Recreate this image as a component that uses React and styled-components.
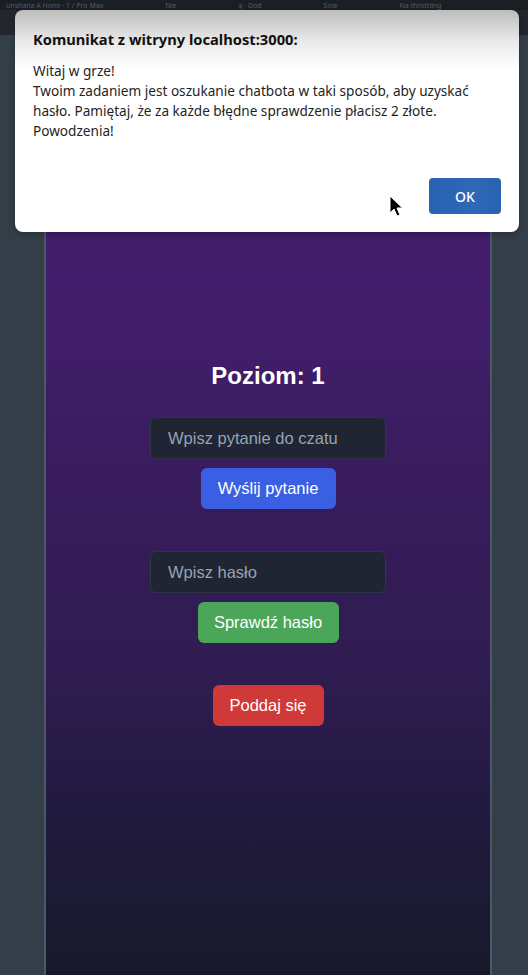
import React from "react";
import styled, { createGlobalStyle } from "styled-components";

const GlobalStyle = createGlobalStyle`
  html, body {
    margin: 0;
    padding: 0;
    background: #333e48;
  }
  #root {
    min-height: 975px;
  }
`;

const Screen = styled.div`
  position: relative;
  width: 528px;
  height: 975px;
  overflow: hidden;
  display: flex;
  flex-direction: column;
  background: #333e48;
  font-family: "Liberation Sans", Arial, sans-serif;
`;

const TabStrip = styled.div`
  height: 10px;
  background: #1b1f24;
  display: flex;
  align-items: center;
  gap: 62px;
  padding-left: 6px;
  overflow: hidden;
  white-space: nowrap;
`;

const TabText = styled.span`
  font-family: "Noto Sans", sans-serif;
  font-size: 7px;
  line-height: 9px;
  color: #565d67;
`;

const AddressBar = styled.div`
  height: 25px;
  background: #23272d;
`;

const Main = styled.div`
  flex: 1;
  display: flex;
  padding-left: 44px;
`;

const Panel = styled.main`
  width: 444px;
  border-left: 2px solid #4d576a;
  border-right: 2px solid #4d576a;
  background: linear-gradient(
    180deg,
    #3e1c66 0%,
    #421e6c 30%,
    #3a1c5f 45%,
    #2e1c4f 70%,
    #221a40 82%,
    #1d1a36 90%,
    #171a2a 100%
  );
  display: flex;
  flex-direction: column;
  align-items: center;
  padding-top: 326px;
`;

const Level = styled.h1`
  margin: 0 0 26px;
  font-size: 24px;
  line-height: 30px;
  font-weight: 700;
  color: #ffffff;
`;

const Group = styled.div`
  display: flex;
  flex-direction: column;
  align-items: center;
  gap: 9px;
  margin-bottom: 42px;
`;

const Field = styled.input`
  box-sizing: border-box;
  width: 236px;
  height: 42px;
  padding: 0 17px;
  border: 1px solid #2e3645;
  border-radius: 6px;
  background: #1f2532;
  color: #fff;
  font-family: "Liberation Sans", Arial, sans-serif;
  font-size: 16.5px;
  outline: none;
  &::placeholder {
    color: #9aa2b3;
  }
`;

const Button = styled.button`
  box-sizing: border-box;
  width: ${(p) => p.$w}px;
  height: 41px;
  border: none;
  border-radius: 6px;
  background: ${(p) => p.$bg};
  color: #ffffff;
  font-family: "Liberation Sans", Arial, sans-serif;
  font-size: 16.5px;
  cursor: pointer;
`;

const Dialog = styled.div`
  position: absolute;
  left: 15px;
  top: 10px;
  width: 504px;
  height: 222px;
  box-sizing: border-box;
  border-radius: 8px;
  background: linear-gradient(180deg, #bdbdbd 0%, #e8e8e8 14%, #ffffff 26%);
  box-shadow: 0 2px 6px rgba(0, 0, 0, 0.25);
  padding: 18px 18px 0 18px;
  font-family: "Noto Sans", "Open Sans", sans-serif;
  color: #1a1a1a;
  display: flex;
  flex-direction: column;
`;

const DialogTitle = styled.div`
  font-size: 14.7px;
  line-height: 22px;
  font-weight: 700;
  color: #111;
  margin-bottom: 11px;
`;

const DialogBody = styled.div`
  font-size: 13.6px;
  line-height: 20px;
  color: #1f1f1f;
`;

const DialogFooter = styled.div`
  margin-top: auto;
  display: flex;
  justify-content: flex-end;
  padding-bottom: 18px;
`;

const OkButton = styled.button`
  width: 72px;
  height: 36px;
  border: none;
  border-radius: 4px;
  background: linear-gradient(90deg, #2a62b3 0%, #3068b8 60%, #2a62b2 100%);
  color: #ffffff;
  font-family: "Noto Sans", sans-serif;
  font-size: 14px;
  font-weight: 500;
`;

const Cursor = styled.svg`
  position: absolute;
  left: 389px;
  top: 195px;
`;

export default function App() {
  return (
    <>
      <GlobalStyle />
      <Screen>
        <TabStrip>
          <TabText>unshana A Hono · 1 / Pro Max</TabText>
          <TabText>Nie</TabText>
          <TabText>ą · Dod</TabText>
          <TabText>Sole</TabText>
          <TabText>Na throttling</TabText>
        </TabStrip>
        <AddressBar />
        <Main>
          <Panel>
            <Level>Poziom: 1</Level>
            <Group>
              <Field placeholder="Wpisz pytanie do czatu" />
              <Button $w={135} $bg="#3a5fe3">Wyślij pytanie</Button>
            </Group>
            <Group>
              <Field placeholder="Wpisz hasło" />
              <Button $w={141} $bg="#4ba65a">Sprawdź hasło</Button>
            </Group>
            <Button $w={111} $bg="#cf3a38">Poddaj się</Button>
          </Panel>
        </Main>

        <Dialog>
          <DialogTitle>Komunikat z witryny localhost:3000:</DialogTitle>
          <DialogBody>
            Witaj w grze!
            <br />
            Twoim zadaniem jest oszukanie chatbota w taki sposób, aby uzyskać
            <br />
            hasło. Pamiętaj, że za każde błędne sprawdzenie płacisz 2 złote.
            <br />
            Powodzenia!
          </DialogBody>
          <DialogFooter>
            <OkButton>OK</OkButton>
          </DialogFooter>
        </Dialog>

        <Cursor width="16" height="24" viewBox="0 0 16 24">
          <path
            d="M1 1 L1 18 L5 14 L8 21 L11 20 L8 13 L13.5 13 Z"
            fill="#000"
            stroke="#fff"
            strokeWidth="1"
          />
        </Cursor>
      </Screen>
    </>
  );
}
